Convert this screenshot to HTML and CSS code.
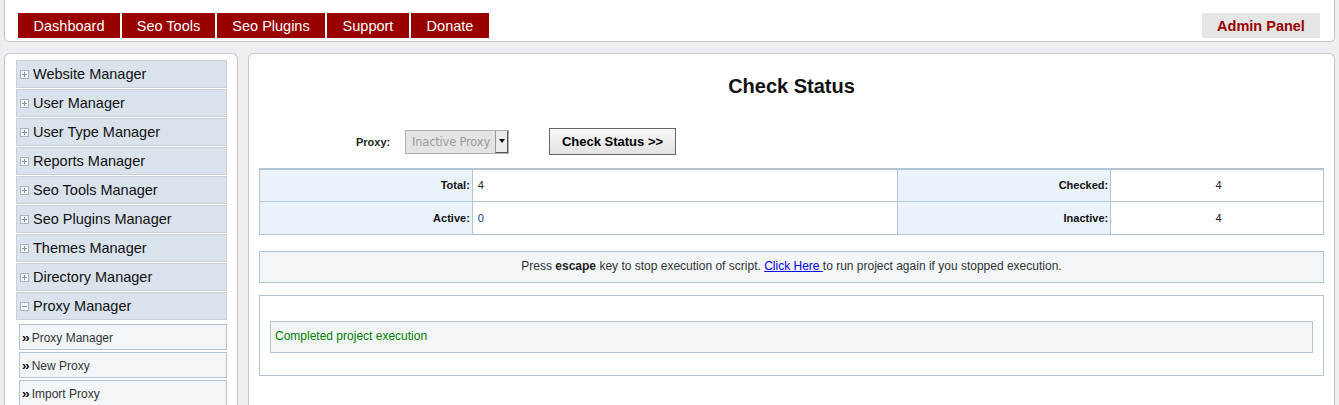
FILE: index.html
```html
<!DOCTYPE html>
<html lang="en">
<head>
<meta charset="utf-8">
<title>Check Status</title>
<link rel="stylesheet" href="styles.css">
</head>
<body>
<div class="page">
  <header class="topbar">
    <nav class="tabs">
      <a class="tab t-dash" href="#">Dashboard</a>
      <a class="tab t-tools" href="#">Seo Tools</a>
      <a class="tab t-plug" href="#">Seo Plugins</a>
      <a class="tab t-sup" href="#">Support</a>
      <a class="tab t-don" href="#">Donate</a>
    </nav>
    <a class="admin" href="#">Admin Panel</a>
  </header>

  <div class="main">
    <aside class="sidebar">
      <div class="menu-item"><span class="pm plus"></span>Website Manager</div>
      <div class="menu-item"><span class="pm plus"></span>User Manager</div>
      <div class="menu-item"><span class="pm plus"></span>User Type Manager</div>
      <div class="menu-item"><span class="pm plus"></span>Reports Manager</div>
      <div class="menu-item"><span class="pm plus"></span>Seo Tools Manager</div>
      <div class="menu-item"><span class="pm plus"></span>Seo Plugins Manager</div>
      <div class="menu-item"><span class="pm plus"></span>Themes Manager</div>
      <div class="menu-item"><span class="pm plus"></span>Directory Manager</div>
      <div class="menu-item"><span class="pm"></span>Proxy Manager</div>
      <div class="submenu">
        <a class="sub-item" href="#"><b>&rsaquo;&rsaquo;</b>Proxy Manager</a>
        <a class="sub-item" href="#"><b>&rsaquo;&rsaquo;</b>New Proxy</a>
        <a class="sub-item" href="#"><b>&rsaquo;&rsaquo;</b>Import Proxy</a>
      </div>
    </aside>

    <section class="content">
      <h1 class="title">Check Status</h1>
      <div class="form-row">
        <span class="form-label">Proxy:</span>
        <div class="fake-select"><span class="fs-text">Inactive Proxy</span><span class="fs-arrow"></span></div>
        <button class="btn" type="button">Check Status &gt;&gt;</button>
      </div>

      <table class="stats">
        <tr>
          <th class="w20">Total:</th>
          <td class="w40">4</td>
          <th class="w20">Checked:</th>
          <td class="w20 center">4</td>
        </tr>
        <tr>
          <th>Active:</th>
          <td class="blue">0</td>
          <th>Inactive:</th>
          <td class="center">4</td>
        </tr>
      </table>

      <div class="note">Press <b>escape</b> key to stop execution of script. <a href="#">Click Here </a> to run project again if you stopped execution.</div>

      <div class="result">
        <div class="result-msg">Completed project execution</div>
      </div>
    </section>
  </div>
</div>
</body>
</html>
```

FILE: styles.css
```css
* { box-sizing: border-box; }
html, body { margin: 0; padding: 0; }
body {
  background: #eceef2;
  font-family: "Liberation Sans", Arial, sans-serif;
  color: #222;
  overflow: hidden;
}
.page { padding: 0 4px; }

.topbar {
  height: 42px;
  background: #fff;
  border: 1px solid #c6c6c6;
  border-top: none;
  border-radius: 0 0 5px 5px;
  display: flex;
  justify-content: space-between;
  align-items: flex-start;
  padding: 13px 14px 0 13px;
}
.tabs { display: flex; gap: 2px; }
.tab {
  display: block;
  height: 25px;
  line-height: 27px;
  background: #990000;
  color: #fff;
  text-decoration: none;
  font-size: 14.5px;
  text-align: center;
}
.t-dash { width: 102px; }
.t-tools { width: 93px; }
.t-plug { width: 108px; }
.t-sup { width: 82px; }
.t-don { width: 78px; }
.admin {
  display: block;
  width: 118px;
  height: 25px;
  line-height: 27px;
  background: #e5e5e5;
  color: #990000;
  font-weight: bold;
  font-size: 14.5px;
  text-align: center;
  text-decoration: none;
}

.main {
  display: flex;
  gap: 10px;
  margin-top: 11px;
  align-items: flex-start;
}
.sidebar {
  width: 234px;
  flex: none;
  height: 352px;
  background: #fff;
  border: 1px solid #c6c6c6;
  border-bottom: none;
  border-radius: 6px 6px 0 0;
  padding: 6px 10px 0 11px;
  overflow: hidden;
}
.menu-item {
  height: 28px;
  margin-bottom: 1px;
  background: #dae3ec;
  border: 1px solid #c7d0d8;
  display: flex;
  align-items: center;
  font-size: 14.5px;
  color: #111;
  padding-left: 3px;
}
.pm {
  position: relative;
  width: 9px;
  height: 9px;
  border: 1px solid #aab2ba;
  background: #f4f6f8;
  margin-right: 4px;
  flex: none;
}
.pm::before {
  content: "";
  position: absolute;
  left: 1px; right: 1px; top: 3px;
  height: 1px;
  background: #8a9096;
}
.pm.plus::after {
  content: "";
  position: absolute;
  top: 1px; bottom: 1px; left: 3px;
  width: 1px;
  background: #8a9096;
}
.submenu {
  margin-top: 4px;
  padding-left: 3px;
  display: flex;
  flex-direction: column;
  gap: 2px;
}
.sub-item {
  display: flex;
  align-items: center;
  height: 26px;
  background: #f2f6f9;
  border: 1px solid #b3c4d2;
  font-size: 12px;
  color: #333;
  text-decoration: none;
  padding-left: 2px;
  padding-top: 1px;
}
.sub-item b { color: #000; font-size: 13px; letter-spacing: -1px; margin-right: 3px; line-height: 12px; }

.content {
  flex: 1;
  height: 352px;
  background: #fff;
  border: 1px solid #c6c6c6;
  border-bottom: none;
  border-radius: 6px 6px 0 0;
  padding: 0 10px;
}
.title {
  margin: 20px 0 0;
  text-align: center;
  font-size: 20px;
  font-weight: bold;
  color: #111;
  line-height: 24px;
}
.form-row {
  display: flex;
  align-items: center;
  margin-top: 30px;
  padding-left: 97px;
  height: 27px;
}
.form-label {
  font-size: 11px;
  font-weight: bold;
  color: #222;
  width: 49px;
}
.fake-select {
  width: 104px;
  height: 24px;
  border: 1px solid #b0b0b0;
  background: #e4e4e4;
  display: flex;
  align-items: center;
  justify-content: space-between;
}
.fs-text {
  font-family: "DejaVu Sans", sans-serif;
  font-size: 11.5px;
  color: #9a9a9a;
  padding-left: 6px;
  letter-spacing: -0.2px;
}
.fs-arrow {
  position: relative;
  width: 13px;
  height: 22px;
  background: #ececec;
  border-left: 1px solid #999;
  border-right: 1px solid #555;
  border-bottom: 1px solid #555;
}
.fs-arrow::after {
  content: "";
  position: absolute;
  left: 3px; top: 8px;
  border-left: 3px solid transparent;
  border-right: 3px solid transparent;
  border-top: 4px solid #111;
}
.btn {
  margin-left: 40px;
  width: 127px;
  height: 27px;
  border: 1px solid #666;
  background: linear-gradient(#f8f8f8, #e2e2e2);
  font-family: "Liberation Sans", Arial, sans-serif;
  font-size: 13px;
  font-weight: bold;
  color: #000;
  padding: 0;
}

.stats {
  width: 100%;
  margin-top: 13px;
  border-collapse: collapse;
  border-top: 2px solid #b3c5d3;
  font-size: 11px;
}
.stats th, .stats td {
  border: 1px solid #b3c5d3;
  height: 33px;
  padding: 0 2px 0 5px;
}
.stats tr:first-child th, .stats tr:first-child td { border-top: none; height: 32px; }
.stats th {
  background: #eaf2fa;
  text-align: right;
  font-weight: bold;
  color: #111;
}
.stats td { color: #222; text-align: left; }
.stats td.center { text-align: center; }
.stats td.blue { color: #0b3a8f; }
.w20 { width: 20%; }
.w40 { width: 40%; }

.note {
  margin-top: 16px;
  height: 32px;
  line-height: 29px;
  background: #f2f6f9;
  border: 1px solid #b3c5d3;
  text-align: center;
  font-size: 12px;
  color: #333;
}
.note a { color: #0000ee; text-decoration: underline; }
.note b { color: #222; }

.result {
  margin-top: 12px;
  height: 81px;
  border: 1px solid #b3c5d3;
  padding: 25px 10px 0;
}
.result-msg {
  height: 32px;
  line-height: 29px;
  background: #f2f6f9;
  border: 1px solid #b3c5d3;
  padding-left: 4px;
  font-size: 12px;
  color: #008000;
}
```
